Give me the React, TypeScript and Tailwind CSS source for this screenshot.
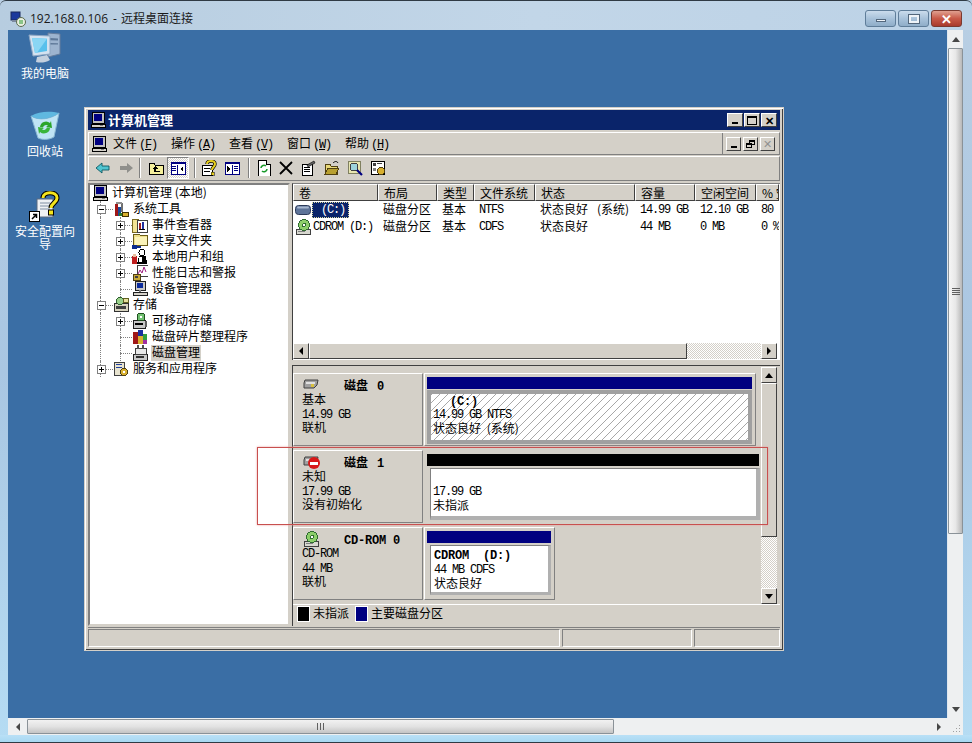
import React from "react";

const cjk = "font-['Noto_Sans_CJK_SC','Noto_Sans',sans-serif]";
const mono = "font-['Liberation_Mono',monospace] text-[12px] tracking-[-1.2px]";
const monoBold = "font-['Liberation_Mono',monospace] text-[12px] tracking-[-0.2px] font-bold";
const raised = "border border-t-white border-l-white border-r-[#404040] border-b-[#404040]";
const dither = "bg-[conic-gradient(#ffffff_25%,#d4d0c8_0_50%,#ffffff_0_75%,#d4d0c8_0)] bg-[length:2px_2px]";
const listCols = "grid grid-cols-[85px_59px_37px_61px_100px_60px_61px_23px]";

const Px = ({ size = 16, children }: { size?: number; children: React.ReactNode }) => (
  <svg width={size} height={size} viewBox={`0 0 ${size} ${size}`} className="shrink-0" shapeRendering="crispEdges">
    {children}
  </svg>
);

const ComputerIcon = () => (
  <Px>
    <rect x="2" y="0" width="12" height="11" fill="#c0c0c0" stroke="#000" />
    <rect x="4" y="2" width="8" height="7" fill="#000080" />
    <rect x="1" y="12" width="14" height="3" fill="#d4d0c8" stroke="#000" />
    <rect x="10" y="13" width="3" height="1" fill="#808080" />
  </Px>
);

const ToolsIcon = () => (
  <Px>
    <rect x="2" y="3" width="3" height="12" fill="#a01818" />
    <rect x="5" y="6" width="3" height="9" fill="#184a9c" />
    <rect x="8" y="2" width="2" height="9" fill="#707070" />
    <rect x="3" y="1" width="6" height="2" fill="#909090" />
    <rect x="9" y="11" width="6" height="4" fill="#d8b030" stroke="#403000" />
    <rect x="6" y="12" width="3" height="3" fill="#2a7a2a" />
  </Px>
);

const EventIcon = () => (
  <Px>
    <path d="M0 2h6l1 1h8v12H0z" fill="#f2e394" stroke="#7a6a20" />
    <rect x="5" y="3" width="10" height="12" fill="#fff" stroke="#404040" />
    <rect x="7" y="6" width="2" height="6" fill="#a02020" />
    <rect x="10" y="5" width="2" height="7" fill="#2030a0" />
    <rect x="7" y="12" width="6" height="1" fill="#000" />
  </Px>
);

const ShareIcon = () => (
  <Px>
    <path d="M1 1h6l1 1h7v10H1z" fill="#efe08a" stroke="#6a5c18" />
    <rect x="3" y="4" width="12" height="8" fill="#fbf3b8" />
    <rect x="0" y="12" width="5" height="4" fill="#0a2a8c" />
    <rect x="5" y="13" width="4" height="2" fill="#0a2a8c" />
  </Px>
);

const UsersIcon = () => (
  <Px>
    <circle cx="10" cy="3.5" r="3" fill="#fff" stroke="#000" />
    <path d="M5 15 L7 7h7l1 8z" fill="#000" />
    <rect x="7" y="8" width="3" height="5" fill="#fff" />
    <rect x="0" y="7" width="5" height="8" fill="#c02020" />
    <rect x="1" y="5" width="3" height="3" fill="#e8c0a0" />
  </Px>
);

const PerfIcon = () => (
  <Px>
    <rect x="5" y="0" width="11" height="11" fill="#fff" stroke="#404040" />
    <path d="M6 9l2-4 2 3 2-6 2 5" fill="none" stroke="#a02080" shapeRendering="auto" />
    <rect x="1" y="9" width="7" height="6" fill="#c8a838" stroke="#504010" />
    <rect x="3" y="11" width="3" height="2" fill="#404040" />
  </Px>
);

const DeviceIcon = () => (
  <Px>
    <rect x="3" y="0" width="10" height="9" fill="#c8c8c8" stroke="#202020" />
    <rect x="5" y="2" width="6" height="5" fill="#0a2a9c" />
    <rect x="1" y="11" width="14" height="3" fill="#d4d0c8" stroke="#202020" />
    <rect x="7" y="9" width="2" height="2" fill="#808080" />
  </Px>
);

const StorageIcon = () => (
  <Px>
    <rect x="1" y="6" width="14" height="8" fill="#d8d4c0" stroke="#303030" />
    <rect x="3" y="9" width="10" height="3" fill="#404040" />
    <circle cx="7" cy="4" r="3.5" fill="#9ad08a" stroke="#306030" />
    <rect x="10" y="1" width="5" height="4" fill="#e8e0a0" stroke="#606020" />
  </Px>
);

const RemovableIcon = () => (
  <Px>
    <rect x="1" y="7" width="12" height="8" fill="#c8c8c8" stroke="#202020" />
    <rect x="3" y="10" width="8" height="2" fill="#000" />
    <circle cx="9" cy="4" r="4" fill="#70c070" stroke="#205020" />
    <circle cx="9" cy="4" r="1" fill="#fff" />
    <rect x="13" y="8" width="2" height="6" fill="#606060" />
  </Px>
);

const DefragIcon = () => (
  <Px>
    <rect x="1" y="3" width="5" height="12" fill="#a01818" />
    <rect x="6" y="1" width="5" height="6" fill="#1830a0" />
    <rect x="6" y="7" width="5" height="8" fill="#d8b030" />
    <rect x="11" y="5" width="4" height="6" fill="#30a040" />
    <rect x="11" y="11" width="4" height="4" fill="#a030a0" />
  </Px>
);

const DiskMgmtIcon = () => (
  <Px>
    <rect x="1" y="9" width="14" height="6" fill="#c8c8c8" stroke="#202020" />
    <rect x="3" y="3" width="11" height="6" fill="#e8e8e8" stroke="#404040" />
    <rect x="5" y="0" width="2" height="4" fill="#505050" />
    <rect x="10" y="0" width="2" height="4" fill="#505050" />
    <rect x="4" y="11" width="8" height="2" fill="#303030" />
  </Px>
);

const ServicesIcon = () => (
  <Px>
    <rect x="1" y="1" width="10" height="13" fill="#e8e4d0" stroke="#404040" />
    <rect x="3" y="3" width="6" height="1" fill="#2040a0" />
    <rect x="3" y="6" width="6" height="1" fill="#2040a0" />
    <circle cx="11" cy="11" r="3.5" fill="#d8b030" stroke="#504010" />
    <rect x="10" y="10" width="2" height="2" fill="#fff" />
  </Px>
);

const DriveIcon = () => (
  <svg width="16" height="10" viewBox="0 0 16 10" className="shrink-0">
    <rect x="0.5" y="0.5" width="15" height="9" rx="3" fill="#5d7398" stroke="#2c3a58" />
    <rect x="2" y="1.5" width="12" height="2" rx="1" fill="#a8b8d0" />
  </svg>
);

const CdIcon = () => (
  <Px>
    <rect x="1" y="10" width="14" height="5" fill="#d8d8d0" stroke="#404040" />
    <circle cx="9" cy="6" r="5.5" fill="#8ccf6a" stroke="#2f6b30" />
    <circle cx="9" cy="6" r="1.5" fill="#fff" stroke="#2f6b30" />
    <rect x="3" y="12" width="7" height="1" fill="#808080" />
  </Px>
);

const DiskIcon = ({ offline }: { offline?: boolean }) => (
  <div className="relative w-[18px] h-[12px]">
    <svg width="16" height="10" viewBox="0 0 16 10">
      <path d="M2 1h13l-1 5-3 3H1V4z" fill="#a0a0a0" stroke="#404040" />
      <rect x="3" y="3" width="9" height="2" fill="#e0e0e0" />
      <rect x="8" y="5" width="3" height="3" fill="#d8c040" />
    </svg>
    {offline && (
      <div className="absolute left-[5px] top-[1px] w-[12px] h-[12px] rounded-full bg-[#d81818] flex items-center justify-center">
        <div className="w-[8px] h-[3px] bg-white" />
      </div>
    )}
  </div>
);

const BackIcon = () => (
  <Px>
    <path d="M7 3L1 8l6 5v-3h7V6H7z" fill="#4fc4d0" stroke="#0e5a62" strokeWidth="0.9" shapeRendering="auto" />
  </Px>
);
const ForwardIcon = () => (
  <Px>
    <path d="M9 3l6 5-6 5v-3H2V6h7z" fill="#8f8f8b" shapeRendering="auto" />
  </Px>
);
const UpFolderIcon = () => (
  <Px>
    <path d="M1 3h5l1 2h8v9H1z" fill="#f5ef9a" stroke="#000" />
    <path d="M7 6L4 9h2v3h6v-1H8V9h2z" fill="#000" />
  </Px>
);
const PanelIcon = ({ rev }: { rev?: boolean }) => (
  <Px>
    <rect x="1" y="2" width="14" height="12" fill="#fff" stroke="#000080" />
    <rect x="1" y="2" width="14" height="2" fill="#000080" />
    {rev ? (
      <>
        <path d="M3 6l3 3-3 3z" fill="#000" />
        <rect x="8" y="5" width="1" height="9" fill="#000080" />
        <rect x="10" y="6" width="4" height="1" fill="#000080" />
        <rect x="10" y="8" width="4" height="1" fill="#000080" />
        <rect x="10" y="10" width="4" height="1" fill="#000080" />
      </>
    ) : (
      <>
        <rect x="2" y="6" width="4" height="1" fill="#000080" />
        <rect x="2" y="8" width="4" height="1" fill="#000080" />
        <rect x="2" y="10" width="4" height="1" fill="#000080" />
        <rect x="7" y="5" width="1" height="9" fill="#000080" />
        <path d="M13 6l-3 3 3 3z" fill="#000" />
      </>
    )}
  </Px>
);
const HelpIcon = () => (
  <Px>
    <rect x="1" y="5" width="10" height="10" fill="#fff" stroke="#000" />
    <rect x="3" y="8" width="6" height="1" fill="#000" />
    <rect x="3" y="11" width="6" height="1" fill="#000" />
    <path d="M6 4c0-4 8-4 8 0 0 3-3 3-3 6" fill="none" stroke="#000" strokeWidth="3.4" shapeRendering="auto" />
    <path d="M6 4c0-4 8-4 8 0 0 3-3 3-3 6" fill="none" stroke="#e8d020" strokeWidth="2" shapeRendering="auto" />
    <rect x="10" y="12" width="3" height="3" fill="#e8d020" stroke="#000" strokeWidth="0.5" />
  </Px>
);
const RefreshIcon = () => (
  <Px>
    <path d="M2 0h8l4 4v12H2z" fill="#fff" stroke="#000" />
    <path d="M10 0v4h4" fill="#d0d0d0" stroke="#000" />
    <path d="M5 8a3 3 0 0 1 5-2" fill="none" stroke="#1a9a2a" strokeWidth="1.6" shapeRendering="auto" />
    <path d="M11 9a3 3 0 0 1-5 2" fill="none" stroke="#1a9a2a" strokeWidth="1.6" shapeRendering="auto" />
  </Px>
);
const DeleteIcon = () => (
  <Px>
    <path d="M2 2l12 12M14 2L2 14" stroke="#000" strokeWidth="1.8" fill="none" shapeRendering="auto" />
  </Px>
);
const PropsIcon = () => (
  <Px>
    <rect x="2" y="4" width="10" height="11" fill="#fff" stroke="#000" />
    <rect x="4" y="7" width="6" height="1" fill="#000" />
    <rect x="4" y="9" width="6" height="1" fill="#000" />
    <rect x="4" y="11" width="6" height="1" fill="#000" />
    <path d="M7 5l7-4 1 2-7 4z" fill="#606060" stroke="#000" strokeWidth="0.6" shapeRendering="auto" />
  </Px>
);
const OpenIcon = () => (
  <Px>
    <path d="M1 4h5l1 2h6v8H1z" fill="#e8d878" stroke="#504010" />
    <path d="M1 14l3-6h11l-3 6z" fill="#b8a030" stroke="#504010" />
    <path d="M9 3c2-2 4-2 5 0" fill="none" stroke="#000" shapeRendering="auto" />
  </Px>
);
const SearchIcon = () => (
  <Px>
    <rect x="1" y="1" width="12" height="12" fill="#e8e6b0" stroke="#808060" />
    <circle cx="7" cy="7" r="4" fill="#9ed4dc" stroke="#404040" />
    <path d="M10 10l5 5" stroke="#000080" strokeWidth="2.2" shapeRendering="auto" />
  </Px>
);
const ExportIcon = () => (
  <Px>
    <rect x="1" y="1" width="13" height="13" fill="#fff" stroke="#000" />
    <rect x="3" y="3" width="3" height="3" fill="#404040" />
    <rect x="7" y="3" width="5" height="1" fill="#404040" />
    <rect x="3" y="8" width="3" height="3" fill="#808080" />
    <circle cx="11" cy="11" r="3.5" fill="#d8b030" stroke="#504010" />
  </Px>
);

const Sep = () => <div className="w-[2px] h-[20px] border-l border-l-[#808080] border-r border-r-white" />;

const WinBtn = ({ children }: { children: React.ReactNode }) => (
  <div className={`${raised} h-full bg-[#d4d0c8] flex items-center justify-center`}>{children}</div>
);

const Arrow = ({ dir }: { dir: "l" | "r" | "u" | "d" }) => {
  const d = { l: "M5 0v8L1 4z", r: "M1 0v8l4-4z", u: "M4 1l4 5H0z", d: "M0 1h8L4 6z" }[dir];
  const horiz = dir === "l" || dir === "r";
  return (
    <svg width={horiz ? 6 : 8} height={horiz ? 8 : 7} viewBox={horiz ? "0 0 6 8" : "0 0 8 7"}>
      <path d={d} fill="#000" />
    </svg>
  );
};

const ScrollBtn = ({ dir }: { dir: "l" | "r" | "u" | "d" }) => (
  <div className={`${raised} w-[16px] h-[16px] bg-[#d4d0c8] flex items-center justify-center shrink-0`}>
    <Arrow dir={dir} />
  </div>
);

const DesktopIcon = ({ label, top, icon }: { label: string; top: number; icon: React.ReactNode }) => (
  <div className="absolute left-0 w-[74px] flex flex-col items-center" style={{ top }}>
    {icon}
    <div className="mt-[1px] text-white text-[12px] leading-[13px] text-center w-[66px]">{label}</div>
  </div>
);

const MyPcArt = () => (
  <svg width="34" height="34" viewBox="0 0 34 34">
    <path d="M20 2l12 1v20l-12 3z" fill="#9db4cf" stroke="#667d9c" />
    <path d="M22 7l8 .5v2l-8-.3zM22 12l8 .2v1.4l-8 0z" fill="#5e7898" />
    <path d="M1 4l21 1v18L5 25z" fill="#d4e2f0" stroke="#8ea6c2" />
    <path d="M4 7l15 .7V20L7 22z" fill="#58c0ec" />
    <path d="M4 7l15 .7-10 14-2 .3z" fill="#8ad6f4" />
    <path d="M9 26l10-2 3 5c-5 3-10 3-14 2z" fill="#c4d0de" />
  </svg>
);

const BinArt = () => (
  <svg width="30" height="32" viewBox="0 0 30 32">
    <path d="M1 5c8 5 20 3 28-3l-5 24c-5 3-12 3-16 1z" fill="#bfe4f5" stroke="#8ab8d4" />
    <path d="M1 5c8 5 20 3 28-3-8-2-20-2-28 3z" fill="#5fb8e0" />
    <path d="M10 16a6 6 0 0 1 10-4l1-2 1 7-6-1 2-1.500a3.500 3.500 0 0 0-5 2z" fill="#2aa52a" />
    <path d="M20 17a6 6 0 0 1-10 4l-1 2-1-7 6 1-2 1.500a3.500 3.500 0 0 0 5-2z" fill="#39b539" />
  </svg>
);

const WizardArt = () => (
  <svg width="32" height="32" viewBox="0 0 32 32">
    <rect x="8" y="8" width="16" height="18" fill="#eef1f4" stroke="#5a6a80" />
    <path d="M11 12h10M11 15h10M11 18h10" stroke="#8090a4" />
    <path d="M14 7c0-7 14-7 14 0 0 5-6 5-6 10" fill="none" stroke="#000" strokeWidth="5" />
    <path d="M14 7c0-7 14-7 14 0 0 5-6 5-6 10" fill="none" stroke="#f4e41c" strokeWidth="3" />
    <rect x="19.500" y="19" width="5" height="5" fill="#f4e41c" stroke="#000" />
    <rect x="0.500" y="20.500" width="10" height="10" fill="#fff" stroke="#000" />
    <path d="M3 28l4-4M4 23.500h3.500V27" fill="none" stroke="#000" strokeWidth="1.500" />
  </svg>
);

type TreeRowProps = {
  depth: 0 | 1 | 2;
  expander?: "+" | "-";
  icon: React.ReactNode;
  label: string;
  selected?: boolean;
  guides?: number[];
};

// guides: x offsets (from the pane's text origin at x=92) of the dotted verticals running through the row
const TreeRow = ({ depth, expander, icon, label, selected, guides = [] }: TreeRowProps) => {
  const iconX = [0, 21, 40][depth];
  return (
    <div className="relative h-[16px] flex items-center" style={{ paddingLeft: iconX }}>
      {guides.map((g) => (
        <div key={g} className="absolute top-0 h-[16px] border-l border-dotted border-l-[#808080]" style={{ left: g }} />
      ))}
      {depth > 0 && (
        <div
          className="absolute top-[8px] w-[12px] border-t border-dotted border-t-[#808080]"
          style={{ left: iconX - 12 }}
        />
      )}
      {expander && (
        <div
          className="absolute top-[4px] w-[9px] h-[9px] border border-[#808080] bg-white flex items-center justify-center"
          style={{ left: iconX - 16 }}
        >
          <div className="relative w-[5px] h-[1px] bg-black">
            {expander === "+" && <div className="absolute left-[2px] top-[-2px] w-[1px] h-[5px] bg-black" />}
          </div>
        </div>
      )}
      <div className="relative">{icon}</div>
      <span className={`ml-[3px] px-[1px] h-[16px] text-[12px] leading-[14px] whitespace-nowrap text-black ${selected ? "bg-[#d4d0c8]" : ""}`}>
        {label}
      </span>
    </div>
  );
};

const Header = ({ label, className = "" }: { label: string; className?: string }) => (
  <div className={`${raised} bg-[#d4d0c8] h-[17px] pl-[5px] text-[12px] leading-[15px] overflow-hidden whitespace-nowrap ${className}`}>
    {label}
  </div>
);

const Cell = ({ children, latin }: { children: React.ReactNode; latin?: boolean }) => (
  <div className={`h-[17px] pl-[5px] flex items-center whitespace-nowrap overflow-hidden ${latin ? mono : "text-[12px] pb-[2px]"}`}>
    {children}
  </div>
);

const DiskLabel = ({ icon, title, lines }: { icon: React.ReactNode; title: React.ReactNode; lines: React.ReactNode[] }) => (
  <div className="w-[130px] shrink-0 h-full border border-t-white border-l-white border-r-[#808080] border-b-[#808080] pl-[8px] pt-[4px]">
    <div className="h-[14px] flex items-center">
      <div className="w-[42px] pl-[1px] shrink-0">{icon}</div>
      <div className="whitespace-pre font-bold text-[12px] leading-[14px] pt-[2px]">{title}</div>
    </div>
    {lines.map((l, i) => (
      <div
        key={i}
        className={`h-[14.500px] leading-[14.500px] text-[12px] whitespace-nowrap flex items-center ${
          typeof l === "string" ? (i === 2 ? "pb-[2px]" : "") : "pt-[2px]"
        }`}
      >
        {l}
      </div>
    ))}
  </div>
);

const L = ({ children }: { children: React.ReactNode }) => <span className={`${mono} whitespace-pre`}>{children}</span>;
const B = ({ children }: { children: React.ReactNode }) => <span className={`${monoBold} whitespace-pre`}>{children}</span>;

const PartLine = ({ children, han }: { children: React.ReactNode; han?: boolean }) => (
  <div className={`h-[14px] flex items-center text-[12px] leading-[14px] whitespace-pre ${han ? "pb-[2px]" : ""}`}>{children}</div>
);

const menus: [string, string][] = [
  ["文件", "F"],
  ["操作", "A"],
  ["查看", "V"],
  ["窗口", "W"],
  ["帮助", "H"],
];

export default function App() {
  return (
    <div className={`relative w-[972px] h-[743px] overflow-hidden flex flex-col bg-[linear-gradient(#b9cfe3,#a9c6e2_50%,#b5dcf3)] text-black ${cjk}`}>
      {/* remote desktop frame */}
      <div className="h-[30px] shrink-0 flex items-center pt-[6px] rounded-t-[6px] border-t border-t-[#2f3a44] bg-[linear-gradient(90deg,#b7cde0,#c2d6e8_55%,#bcd2e6)]">
        <div className="ml-[10px] w-[17px]">
          <svg width="17" height="16" viewBox="0 0 17 16">
            <rect x="1" y="1" width="9" height="8" fill="#1c3a9c" stroke="#1a2a5c" />
            <rect x="2" y="9" width="7" height="2" fill="#7c8aa0" />
            <circle cx="11" cy="11" r="4.500" fill="#e8efe0" stroke="#5a6a50" />
            <path d="M9 10h4M9 12h4" stroke="#2a9a30" />
          </svg>
        </div>
        <span className="ml-[3px] text-[12px] text-[#1a1a1a] font-['Open_Sans','Noto_Sans_CJK_SC',sans-serif]">
          192.168.0.106
          <span className="ml-[5px] mr-[4px]">-</span>
          远程桌面连接
        </span>
        <div className="ml-auto mr-[10px] flex gap-[2px]">
          <div className="w-[31px] h-[17px] rounded-[3px] border border-[#5f7d99] bg-[linear-gradient(#cbdcec,#a8c2da_50%,#8fadc8)] flex items-center justify-center pt-[4px]">
            <div className="w-[10px] h-[3px] bg-[#eef3f8] border border-[#53677c]" />
          </div>
          <div className="w-[31px] h-[17px] rounded-[3px] border border-[#5f7d99] bg-[linear-gradient(#cbdcec,#a8c2da_50%,#8fadc8)] flex items-center justify-center">
            <div className="w-[10px] h-[8px] border-2 border-[#eef3f8] outline outline-1 outline-[#53677c]" />
          </div>
          <div className="w-[31px] h-[17px] rounded-[3px] border border-[#7a3a30] bg-[linear-gradient(#e0a090,#c85a48_50%,#a83a2c)] flex items-center justify-center text-white font-bold text-[13px] leading-none">
            ✕
          </div>
        </div>
      </div>

      <div className="flex-1 min-h-0 flex pl-[8px] pr-[9px]">
        {/* desktop */}
        <div className="relative w-[940px] bg-[#3a6ea5] border-r border-r-[#dfe8f0] text-[12px]">
          <DesktopIcon label="我的电脑" top={1} icon={<MyPcArt />} />
          <DesktopIcon label="回收站" top={81} icon={<BinArt />} />
          <DesktopIcon label="安全配置向导" top={161} icon={<WizardArt />} />

          {/* computer management window */}
          <div className="absolute left-[77px] top-[78px] w-[698px] h-[542px] bg-[#d4d0c8] px-[3px] pt-[2px] pb-[3px] flex flex-col shadow-[inset_1px_1px_0_#ffffff,inset_-1px_-1px_0_#404040] outline outline-1 outline-[#d4d0c8]">
            <div className="h-[20px] shrink-0 bg-[#0a246a] flex items-center pl-[2px] pr-[3px]">
              <ComputerIcon />
              <span className="ml-[2px] text-white font-bold text-[13px]">计算机管理</span>
              <div className="ml-auto flex gap-[1px] h-[14px]">
                <div className="w-[16px]"><WinBtn><div className="w-[6px] h-[2px] bg-black mt-[6px]" /></WinBtn></div>
                <div className="w-[16px]"><WinBtn><div className="w-[10px] h-[9px] border border-t-2 border-black" /></WinBtn></div>
                <div className="w-[16px]"><WinBtn><span className="text-[11px] font-bold leading-none">✕</span></WinBtn></div>
              </div>
            </div>

            <div className="mt-[2px] h-[23px] shrink-0 flex items-center border border-t-white border-l-white border-b-[#808080] border-r-[#808080] relative">
              <div className="ml-[2px]"><ComputerIcon /></div>
              <div className="ml-[6px] flex text-[12px]">
                {menus.map(([label, key]) => (
                  <div key={key} className="w-[58px] whitespace-nowrap">
                    {label}
                    <span className={`${mono} ml-[2px]`}>
                      (<span className="underline">{key}</span>)
                    </span>
                  </div>
                ))}
              </div>
              <div className="ml-auto h-full flex items-center gap-[2px] border-l border-l-[#808080] pl-[3px] pr-[4px]">
                <div className="w-[15px] h-[14px]"><WinBtn><div className="w-[6px] h-[2px] bg-black mt-[6px]" /></WinBtn></div>
                <div className="w-[15px] h-[14px]">
                  <WinBtn>
                    <div className="relative w-[9px] h-[8px]">
                      <div className="absolute right-0 top-0 w-[6px] h-[5px] border border-t-2 border-black" />
                      <div className="absolute left-0 bottom-0 w-[6px] h-[5px] border border-t-2 border-black bg-[#d4d0c8]" />
                    </div>
                  </WinBtn>
                </div>
                <div className="w-[15px] h-[14px]"><WinBtn><span className="text-[11px] leading-none text-[#909090]">✕</span></WinBtn></div>
              </div>
            </div>

            <div className="mt-[1px] h-[25px] shrink-0 flex items-center pl-[6px] pb-[1px] border border-t-white border-l-white border-b-[#808080] border-r-[#808080]">
              <BackIcon />
              <div className="w-[7px]" />
              <ForwardIcon />
              <div className="w-[5px]" />
              <Sep />
              <div className="w-[7px]" />
              <UpFolderIcon />
              <div className={`ml-[3px] w-[22px] h-[22px] flex items-center justify-center border border-t-[#808080] border-l-[#808080] border-r-white border-b-white ${dither}`}>
                <PanelIcon />
              </div>
              <div className="w-[5px]" />
              <Sep />
              <div className="w-[5px]" />
              <HelpIcon />
              <div className="w-[7px]" />
              <PanelIcon rev />
              <div className="w-[8px]" />
              <Sep />
              <div className="w-[6px]" />
              <RefreshIcon />
              <div className="w-[6px]" />
              <DeleteIcon />
              <div className="w-[6px]" />
              <PropsIcon />
              <div className="w-[8px]" />
              <OpenIcon />
              <div className="w-[7px]" />
              <SearchIcon />
              <div className="w-[7px]" />
              <ExportIcon />
            </div>

            {/* panes */}
            <div className="mt-[2px] flex-1 min-h-0 flex gap-[2px]">
              <div className="w-[202px] shrink-0 bg-white border-2 border-t-[#808080] border-l-[#808080] border-r-[#d4d0c8] border-b-[#d4d0c8] pl-[2px]">
                <TreeRow depth={0} icon={<ComputerIcon />} label="计算机管理 (本地)" />
                <TreeRow depth={1} expander="-" icon={<ToolsIcon />} label="系统工具" guides={[8]} />
                <TreeRow depth={2} expander="+" icon={<EventIcon />} label="事件查看器" guides={[8, 28]} />
                <TreeRow depth={2} expander="+" icon={<ShareIcon />} label="共享文件夹" guides={[8, 28]} />
                <TreeRow depth={2} expander="+" icon={<UsersIcon />} label="本地用户和组" guides={[8, 28]} />
                <TreeRow depth={2} expander="+" icon={<PerfIcon />} label="性能日志和警报" guides={[8, 28]} />
                <TreeRow depth={2} icon={<DeviceIcon />} label="设备管理器" guides={[8, 28]} />
                <TreeRow depth={1} expander="-" icon={<StorageIcon />} label="存储" guides={[8]} />
                <TreeRow depth={2} expander="+" icon={<RemovableIcon />} label="可移动存储" guides={[8, 28]} />
                <TreeRow depth={2} icon={<DefragIcon />} label="磁盘碎片整理程序" guides={[8, 28]} />
                <TreeRow depth={2} icon={<DiskMgmtIcon />} label="磁盘管理" selected guides={[8, 28]} />
                <TreeRow depth={1} expander="+" icon={<ServicesIcon />} label="服务和应用程序" guides={[8]} />
              </div>

              <div className="flex-1 min-w-0 flex flex-col">
                {/* volume list */}
                <div className="h-[177px] shrink-0 bg-white border-t border-l border-t-[#808080] border-l-[#404040] flex flex-col overflow-hidden">
                  <div className={listCols}>
                    <Header label="卷" />
                    <Header label="布局" />
                    <Header label="类型" />
                    <Header label="文件系统" />
                    <Header label="状态" />
                    <Header label="容量" />
                    <Header label="空闲空间" />
                    <Header label="% 空" />
                  </div>
                  <div className={listCols}>
                    <div className="h-[17px] pl-[2px] flex items-center">
                      <DriveIcon />
                      <span className={`ml-[1px] w-[37px] h-[16px] pl-[8px] bg-[#0a246a] text-white border border-dotted border-[#d8d8a0] leading-[14px] ${mono}`}>
                        (C:)
                      </span>
                    </div>
                    <Cell>磁盘分区</Cell>
                    <Cell>基本</Cell>
                    <Cell latin>NTFS</Cell>
                    <Cell>状态良好 <span className="ml-[9px]">(系统)</span></Cell>
                    <Cell latin>14.99 GB</Cell>
                    <Cell latin>12.10 GB</Cell>
                    <Cell latin>80</Cell>
                  </div>
                  <div className={listCols}>
                    <div className="h-[17px] pl-[2px] flex items-center">
                      <CdIcon />
                      <span className={`${mono} whitespace-pre ml-[2px]`}>CDROM (D:)</span>
                    </div>
                    <Cell>磁盘分区</Cell>
                    <Cell>基本</Cell>
                    <Cell latin>CDFS</Cell>
                    <Cell>状态良好</Cell>
                    <Cell latin>44 MB</Cell>
                    <Cell latin>0 MB</Cell>
                    <Cell latin>0 %</Cell>
                  </div>
                  <div className="mt-auto h-[16px] mb-[1px] flex">
                    <ScrollBtn dir="l" />
                    <div className={`w-[378px] ${raised} bg-[#d4d0c8]`} />
                    <div className={`flex-1 ${dither}`} />
                    <ScrollBtn dir="r" />
                    <div className="w-[3px] bg-white" />
                  </div>
                </div>

                {/* disk view */}
                <div className="mt-[5px] flex-1 min-h-0 border-t border-l border-t-[#404040] border-l-[#404040] flex flex-col">
                  <div className="h-[238px] shrink-0 flex">
                    <div className="flex-1 min-w-0 flex flex-col gap-[4px] pt-[7px]">
                      <div className="h-[73px] flex gap-[1px]">
                        <DiskLabel
                          icon={<DiskIcon />}
                          title={<>磁盘<span className="ml-[9px]"><B>0</B></span></>}
                          lines={["基本", <L>14.99 GB</L>, "联机"]}
                        />
                        <div className="w-[332px] h-full border border-t-white border-l-white border-r-[#808080] border-b-[#808080] px-[2px] pt-[3px]">
                          <div className="w-[325px] h-[12px] bg-[#000080]" />
                          <div className="w-[325px] h-[54px] mt-[1px] border-4 border-[#a0a0a0] bg-[repeating-linear-gradient(135deg,#a8a8a8_0_1px,#ffffff_1px_5.660px)] pl-[2px]">
                            <PartLine><span className="pl-[17px]"><B>(C:)</B></span></PartLine>
                            <PartLine><L>14.99 GB NTFS</L></PartLine>
                            <PartLine han>状态良好 <span className="ml-[3px]">(系统)</span></PartLine>
                          </div>
                        </div>
                      </div>

                      <div className="h-[73px] flex gap-[1px]">
                        <DiskLabel
                          icon={<DiskIcon offline />}
                          title={<>磁盘<span className="ml-[9px]"><B>1</B></span></>}
                          lines={["未知", <L>17.99 GB</L>, "没有初始化"]}
                        />
                        <div className="w-[338px] h-full pl-[3px] pt-[4px]">
                          <div className="w-[332px] h-[12px] bg-black" />
                          <div className="ml-[3px] w-[330px] h-[52px] mt-[2px] border-t border-l border-t-[#808080] border-l-[#808080] border-r-[4px] border-b-[4px] border-r-[#b0b0b0] border-b-[#b0b0b0] bg-white pl-[2px] pt-[16px]">
                            <PartLine><L>17.99 GB</L></PartLine>
                            <PartLine han>未指派</PartLine>
                          </div>
                        </div>
                      </div>

                      <div className="h-[73px] flex gap-[1px]">
                        <DiskLabel
                          icon={<CdIcon />}
                          title={<B>CD-ROM 0</B>}
                          lines={[<L>CD-ROM</L>, <L>44 MB</L>, "联机"]}
                        />
                        <div className="w-[131px] h-full border border-t-white border-l-white border-r-[#808080] border-b-[#808080] px-[2px] pt-[3px]">
                          <div className="w-[124px] h-[12px] bg-[#000080]" />
                          <div className="ml-[3px] w-[121px] h-[50px] mt-[2px] border-t border-l border-t-[#808080] border-l-[#808080] border-r-[3px] border-b-[3px] border-r-[#b0b0b0] border-b-[#b0b0b0] bg-white pl-[3px] pt-[3px]">
                            <PartLine><B>CDROM  (D:)</B></PartLine>
                            <PartLine><L>44 MB CDFS</L></PartLine>
                            <PartLine han>状态良好</PartLine>
                          </div>
                        </div>
                      </div>
                    </div>
                    <div className="w-[16px] shrink-0 flex flex-col mr-[3px] pt-[1px]">
                      <ScrollBtn dir="u" />
                      <div className={`h-[154px] ${raised} bg-[#d4d0c8]`} />
                      <div className={`flex-1 ${dither}`} />
                      <ScrollBtn dir="d" />
                    </div>
                  </div>
                  <div className="flex-1 border-t border-t-white flex items-start pt-[1px] pl-[4px] text-[12px] leading-[14px]">
                    <div className="w-[11px] h-[14px] bg-black border border-white box-content" />
                    <span className="ml-[3px] w-[42px]">未指派</span>
                    <div className="w-[11px] h-[14px] bg-[#000080] border border-white box-content" />
                    <span className="ml-[3px]">主要磁盘分区</span>
                  </div>
                </div>
              </div>
            </div>

            {/* status bar */}
            <div className="mt-[1px] h-[20px] shrink-0 flex gap-[2px] border-t border-t-[#808080] pt-[1px]">
              <div className="w-[472px] border border-t-[#808080] border-l-[#808080] border-r-white border-b-white" />
              <div className="w-[130px] border border-t-[#808080] border-l-[#808080] border-r-white border-b-white" />
              <div className="flex-1 border border-t-[#808080] border-l-[#808080] border-r-white border-b-white" />
            </div>
          </div>

          {/* red annotation box */}
          <div className="absolute left-[249px] top-[417px] w-[511px] h-[78px] border border-[#c8504f] shadow-[0_0_2px_#e8a0a0] pointer-events-none" />
        </div>

        {/* outer vertical scrollbar */}
        <div className="w-[15px] shrink-0 bg-[#eef0f1] flex flex-col items-center">
          <div className="h-[18px] shrink-0 flex items-center opacity-70"><Arrow dir="u" /></div>
          <div className="w-full h-[486px] rounded-[1px] border border-[#8a9298] bg-[linear-gradient(90deg,#f6f6f6,#e8e8e8_50%,#b8b8b8)] flex flex-col items-center justify-center gap-[1px]">
            <div className="w-[8px] h-[1px] bg-[#606060]" />
            <div className="w-[8px] h-[1px] bg-[#606060]" />
            <div className="w-[8px] h-[1px] bg-[#606060]" />
            <div className="w-[8px] h-[1px] bg-[#606060]" />
          </div>
          <div className="flex-1" />
          <div className="h-[18px] shrink-0 flex items-center opacity-70"><Arrow dir="d" /></div>
        </div>
      </div>

      {/* outer horizontal scrollbar */}
      <div className="h-[17px] shrink-0 ml-[8px] mr-[9px] bg-[#eef0f1] flex items-center">
        <div className="w-[19px] flex justify-center opacity-70"><Arrow dir="l" /></div>
        <div className="w-[587px] h-[15px] rounded-[1px] border border-[#8a9298] bg-[linear-gradient(#f2f2f2,#e2e2e2_50%,#c4c4c4)] flex items-center justify-center">
          <div className="w-[7px] h-[7px] border-x border-[#606060] flex justify-center"><div className="w-[1px] bg-[#606060]" /></div>
        </div>
        <div className="flex-1" />
        <div className="w-[18px] flex justify-center opacity-70"><Arrow dir="r" /></div>
        <div className="w-[15px] h-full flex items-end justify-end pr-[2px] pb-[2px]">
          <svg width="9" height="9" viewBox="0 0 9 9" shapeRendering="crispEdges">
            <path d="M7 1h1v1H7zM4 4h1v1H4zM7 4h1v1H7zM1 7h1v1H1zM4 7h1v1H4zM7 7h1v1H7z" fill="#a0a0a0" />
          </svg>
        </div>
      </div>
      <div className="h-[8px] shrink-0 bg-[linear-gradient(#b9e0f6,#a8d8f2)] border-b border-b-[#2f3a44]" />
    </div>
  );
}
